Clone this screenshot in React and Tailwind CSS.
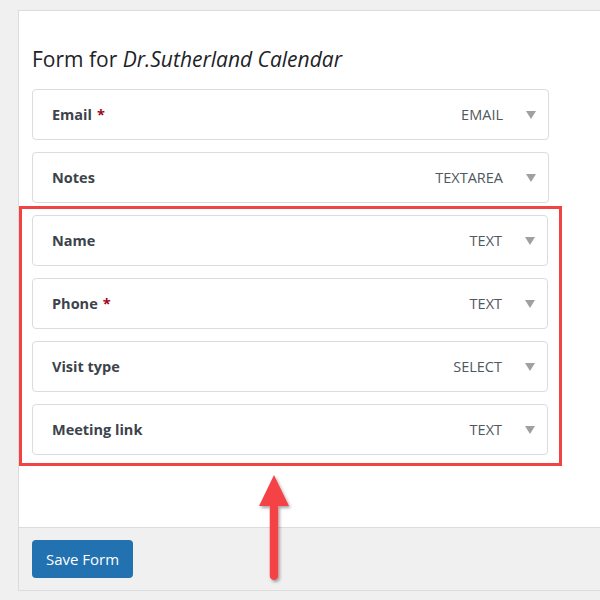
import React from 'react';

const fields = [
  { label: 'Email', type: 'EMAIL', required: true },
  { label: 'Notes', type: 'TEXTAREA' },
];

const highlighted = [
  { label: 'Name', type: 'TEXT' },
  { label: 'Phone', type: 'TEXT', required: true },
  { label: 'Visit type', type: 'SELECT' },
  { label: 'Meeting link', type: 'TEXT' },
];

const FieldRow = ({ field }) => (
  <div className="flex items-center h-[51px] pl-[19px] pr-[12px] bg-white border border-[#dcdcde] rounded-[4px]">
    <span className="text-[14.5px] font-bold text-[#3c434a]">
      {field.label}
      {field.required && <span className="ml-[5px] text-[#a3001b]">*</span>}
    </span>
    <span className="ml-auto text-[14.5px] text-[#50575e]">{field.type}</span>
    <svg width="10" height="8" viewBox="0 0 10 8" className="ml-[23px]">
      <polygon points="0,0 10,0 5,8" fill="#a0a0a0" />
    </svg>
  </div>
);

const Arrow = () => (
  <svg
    width="50"
    height="120"
    viewBox="0 0 50 120"
    className="absolute left-[250px] top-[470px]"
  >
    <defs>
      <filter id="arrowShadow" x="-50%" y="-20%" width="200%" height="140%">
        <feDropShadow dx="1.5" dy="2" stdDeviation="1.5" floodColor="#000" floodOpacity="0.35" />
      </filter>
    </defs>
    <g filter="url(#arrowShadow)" fill="#f44346">
      <rect x="19.75" y="30" width="8.5" height="80" rx="4.25" />
      <polygon points="9,36 39,36 24,5" />
    </g>
  </svg>
);

export default function App() {
  return (
    <div
      className="relative w-[600px] h-[600px] overflow-hidden bg-[#f0f0f1] pl-[18px] pt-[10px]"
      style={{ fontFamily: '"Open Sans", "Noto Sans", sans-serif' }}
    >
      <div className="w-[620px] border border-[#dcdcde] bg-white">
        <div className="pl-[13px] pt-[34px] pb-[61px]">
          <h2 className="text-[21px] leading-[28px] text-[#1d2327] mb-[16px]">
            Form for <em>Dr.Sutherland Calendar</em>
          </h2>
          <div className="w-[517px] flex flex-col gap-[12px]">
            {fields.map((f) => (
              <FieldRow key={f.label} field={f} />
            ))}
          </div>
          <div className="-ml-[13px] w-[543px] mt-[3px] border-[3px] border-[#f24343] pl-[10px] pr-[11px] pt-[6px] pb-[8px]">
            <div className="flex flex-col gap-[12px]">
              {highlighted.map((f) => (
                <FieldRow key={f.label} field={f} />
              ))}
            </div>
          </div>
        </div>
        <div className="border-t border-[#dcdcde] bg-[#f0f0f1] pl-[13px] py-[12px]">
          <button className="h-[38px] w-[101px] rounded-[4px] bg-[#2271b1] text-white text-[15px]">
            Save Form
          </button>
        </div>
      </div>
      <Arrow />
    </div>
  );
}
